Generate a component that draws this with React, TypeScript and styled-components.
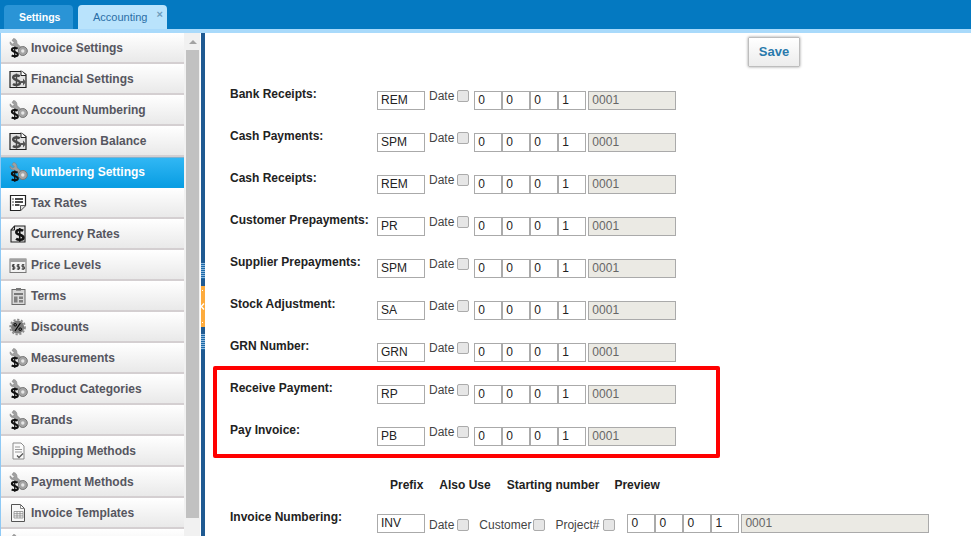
import styled, { createGlobalStyle } from "styled-components";

const GlobalStyle = createGlobalStyle`
  html, body {
    margin: 0;
    padding: 0;
    height: 100%;
    overflow: hidden;
    background: #fff;
    font-family: "Liberation Sans", Arial, sans-serif;
  }
`;

const Shell = styled.div`
  width: 971px;
  height: 536px;
  display: flex;
  flex-direction: column;
  overflow: hidden;
`;

const TopBar = styled.div`
  height: 29px;
  flex: none;
  display: flex;
  align-items: flex-end;
  gap: 5px;
  padding-left: 4px;
  background: #0479c1;
  border-top: 1px solid #2b8ccb;
  box-sizing: content-box;
  margin-top: -1px;
  border-bottom: 4px solid #a9dafb;
`;

const Tab = styled.div<{ $active?: boolean }>`
  position: relative;
  height: 24px;
  width: ${({ $active }) => ($active ? "89px" : "69px")};
  box-sizing: border-box;
  padding-left: 15px;
  border-radius: 4px 4px 0 0;
  font-size: 10.5px;
  line-height: 25px;
  font-weight: ${({ $active }) => ($active ? "normal" : "bold")};
  color: ${({ $active }) => ($active ? "#2a6ea6" : "#fff")};
  background: ${({ $active }) => ($active ? "#b9e3fc" : "#2a94d6")};
  ${({ $active }) => $active && "font-size: 11px;"}
`;

const TabClose = styled.span`
  position: absolute;
  top: -3px;
  right: 4px;
  font-size: 11px;
  font-weight: bold;
  color: #6f9cbc;
`;

const Body = styled.div`
  flex: 1;
  min-height: 0;
  display: flex;
`;

const SideMenu = styled.div`
  width: 184px;
  flex: none;
  overflow: hidden;
  box-sizing: border-box;
  border-left: 1px solid #8ec9f5;
  background: #fff;
`;

const MenuRow = styled.div<{ $active?: boolean; $shift?: number }>`
  height: 31px;
  box-sizing: border-box;
  display: flex;
  align-items: center;
  padding-left: 7px;
  border-bottom: 2px solid ${({ $active }) => ($active ? "#0a9ee3" : "#d4cfd1")};
  font-size: 12px;
  font-weight: bold;
  color: ${({ $active }) => ($active ? "#fff" : "#565660")};
  background: ${({ $active }) =>
    $active
      ? "linear-gradient(#31b7f4, #0a9ee3)"
      : "linear-gradient(#ffffff, #e9e9e9)"};
  ${({ $active }) => $active && "border-top: 1px solid #7fb2cf;"}

  svg {
    width: 20px;
    height: 20px;
    flex: none;
    overflow: visible;
    margin-right: ${({ $shift }) => 3 + ($shift ?? 0)}px;
  }
`;

const ScrollTrack = styled.div`
  width: 16px;
  flex: none;
  box-sizing: border-box;
  padding-left: 2px;
  display: flex;
  flex-direction: column;
  align-items: flex-start;
  background: #f1f1f1;
`;

const ScrollArrow = styled.div`
  height: 17px;
  width: 13px;
  display: flex;
  align-items: center;
  justify-content: center;

  &::before {
    content: "";
    border-left: 4px solid transparent;
    border-right: 4px solid transparent;
    border-bottom: 4px solid #a3a3a3;
  }
`;

const ScrollThumb = styled.div`
  width: 13px;
  height: 468px;
  background: #c1c1c1;
`;

const Splitter = styled.div`
  width: 4px;
  flex: none;
  margin-left: 1px;
  display: flex;
  flex-direction: column;
  align-items: center;
  background: #1f5a92;
`;

const Grip = styled.div<{ $top: number }>`
  width: 4px;
  height: 16px;
  margin-top: ${({ $top }) => $top}px;
  background: repeating-linear-gradient(#8fb7dc 0 1px, #1c6aa8 1px 2px);
`;

const Toggle = styled.div`
  position: relative;
  width: 4px;
  height: 41px;
  margin-top: 7px;
  flex: none;
  background: #fdab3d;

  &::before,
  &::after {
    content: "";
    position: absolute;
    left: 1px;
    width: 1px;
    height: 1px;
    background: #fff;
  }
  &::before {
    top: 4px;
  }
  &::after {
    bottom: 4px;
  }

  svg {
    position: absolute;
    left: -1px;
    top: 17px;
    width: 5px;
    height: 7px;
  }
`;

const Main = styled.div`
  position: relative;
  flex: 1;
  min-width: 0;
  padding-left: 25px;
`;

const SaveBar = styled.div`
  height: 51px;
  display: flex;
  justify-content: flex-end;
  padding: 4px 171px 0 0;
  box-sizing: border-box;
`;

const SaveButton = styled.button`
  width: 52px;
  height: 30px;
  padding: 0 0 2px;
  border: 1px solid #bdbdbd;
  border-radius: 1px;
  background: linear-gradient(#ffffff, #ececec);
  box-shadow: 0 0 3px rgba(0, 0, 0, 0.4);
  font-family: inherit;
  font-size: 13px;
  font-weight: bold;
  color: #2a7aac;
`;

const FormRow = styled.div`
  height: 42px;
  display: flex;
  align-items: flex-start;
  font-size: 12px;
`;

const FieldLabel = styled.div`
  width: 147px;
  flex: none;
  margin-top: 3px;
  line-height: 14px;
  font-weight: bold;
  color: #222;
`;

const Field = styled.input<{ $w: number; $gap?: number; $grey?: boolean }>`
  width: ${({ $w }) => $w}px;
  height: 19px;
  flex: none;
  box-sizing: border-box;
  margin: 7px 0 0 ${({ $gap }) => $gap ?? 0}px;
  padding: 0 0 1px 3px;
  border: 1px solid #aaa;
  border-radius: 0;
  outline: none;
  font-family: inherit;
  font-size: 12px;
  color: ${({ $grey }) => ($grey ? "#666" : "#222")};
  background: ${({ $grey }) => ($grey ? "#ebeae4" : "#fff")};
`;

const InlineText = styled.span<{ $gap: number; $top?: number }>`
  flex: none;
  margin: ${({ $top }) => $top ?? 5}px 0 0 ${({ $gap }) => $gap}px;
  line-height: 14px;
  color: #444;
`;

const Check = styled.input.attrs({ type: "checkbox" })<{ $gap: number; $top?: number }>`
  appearance: none;
  width: 12px;
  height: 12px;
  flex: none;
  box-sizing: border-box;
  margin: ${({ $top }) => $top ?? 6}px 0 0 ${({ $gap }) => $gap}px;
  border: 1px solid #ababab;
  border-radius: 2px;
  background: #e6e6e6;
`;

const HeadingRow = styled.div`
  display: flex;
  margin-top: 16px;
  padding-left: 160px;
  font-size: 12px;
  line-height: 14px;
  font-weight: bold;
  color: #222;
`;

const Heading = styled.span<{ $gap?: number }>`
  margin-left: ${({ $gap }) => $gap ?? 0}px;
`;

const InvoiceRow = styled(FormRow)`
  margin-top: 15px;
`;

const Highlight = styled.div`
  position: absolute;
  left: 8px;
  top: 333px;
  width: 507px;
  height: 92px;
  box-sizing: border-box;
  border: 4px solid #f00;
  border-radius: 2px;
  pointer-events: none;
`;

type IconKind =
  | "wrench"
  | "money"
  | "list"
  | "currency"
  | "price"
  | "clip"
  | "gear"
  | "ship"
  | "template";

const Dollar = ({
  x = 0,
  y = 0,
  s = 1,
  color = "#111",
}: {
  x?: number;
  y?: number;
  s?: number;
  color?: string;
}) => (
  <g transform={`translate(${x} ${y}) scale(${s})`} fill="none" stroke={color} strokeWidth="2.2">
    <path d="M8 2.4C6.6 1.4 2 1.2 2 3.6 2 6.2 8.2 5.6 8.2 8.4 8.2 10.8 3.4 10.6 1.8 9.4" />
    <path d="M5 0v12" strokeWidth="1.4" />
  </g>
);

const Icon = ({ kind }: { kind: IconKind }) => {
  switch (kind) {
    case "wrench":
      return (
        <svg viewBox="0 0 20 20">
          <path
            d="M5.5 .5 4 2.5 6.5 4.8 4.5 6 2 3.8C1.6 6.6 3.8 8.4 6.4 7.8L13 14 15.4 11.5 9 5.4C9.2 2.6 7.6.3 5.5 .5Z"
            fill="#a0a0a0"
            stroke="#7a7a7a"
            strokeWidth=".5"
          />
          <circle cx="14.8" cy="13" r="4.5" fill="#a4a4a4" stroke="#777" />
          <circle cx="14.8" cy="13" r="1.7" fill="#e6e6e6" />
          <Dollar x={2} y={8.4} s={0.95} />
        </svg>
      );
    case "money":
      return (
        <svg viewBox="0 0 20 20">
          <path d="M2 2.5h12l4 3v13H2Z" fill="#e2e2e2" stroke="#222" strokeWidth="1.2" />
          <path d="M13 1.5v5h5" fill="#fff" stroke="#222" />
          <Dollar x={3} y={4.6} s={1.1} color="#4a4a4a" />
          <path d="M12.5 12h2.5V9.5l3 3.5-3 3.5V14h-2.5Z" fill="#555" />
        </svg>
      );
    case "list":
      return (
        <svg viewBox="0 0 20 20">
          <path d="M2.5 2.5h15v10l-5 5h-10Z" fill="#fff" stroke="#222" strokeWidth="1.2" />
          <path d="M17.5 12.5h-5v5" fill="#ddd" stroke="#555" />
          <path d="M4.5 6h1M7 6h8M4.5 9h1M7 9h8M4.5 12h1M7 12h4.5" stroke="#111" strokeWidth="1.3" />
        </svg>
      );
    case "currency":
      return (
        <svg viewBox="0 0 20 20">
          <path d="M6.5 2H17v16H3V6Z" fill="#e4e4e4" stroke="#222" strokeWidth="1.1" />
          <path d="M6.5 2v4H3" fill="none" stroke="#222" />
          <Dollar x={6} y={4} s={1.15} />
        </svg>
      );
    case "price":
      return (
        <svg viewBox="0 0 20 20">
          <rect x="2" y="4" width="16" height="13.5" fill="#f3f3f3" stroke="#777" />
          <rect x="2" y="4" width="16" height="3" fill="#a0a0a0" />
          <g transform="translate(3.4 9)" fill="none" stroke="#333" strokeWidth=".9">
            <path d="M3.4 .8H1v2h2.4v2.2H.6M2 0v6" />
            <path d="M8.2 .8H5.8v2h2.4v2.2H5.4M6.9 0v6" />
            <path d="M13 .8h-2.4v2H13v2.2h-2.8M11.7 0v6" />
          </g>
        </svg>
      );
    case "clip":
      return (
        <svg viewBox="0 0 20 20">
          <rect x="4" y="3.5" width="13" height="15" fill="#d8d8d8" stroke="#6a6a6a" />
          <rect x="8" y="2" width="5" height="2.6" fill="#777" />
          <path d="M6 7h9v2H6Z" fill="#777" />
          <path d="M6 10.5h3.5v6H6ZM11 10.5h4v2.4h-4ZM11 14h4v2.5h-4Z" fill="#808080" />
        </svg>
      );
    case "gear":
      return (
        <svg viewBox="0 0 20 20">
          <circle cx="9.6" cy="10" r="6.6" fill="#7a7a7a" />
          <circle cx="9.6" cy="10" r="7.4" fill="none" stroke="#8c8c8c" strokeWidth="1.8" strokeDasharray="2.2 1.6" />
          <path d="M7 14 12.4 6" stroke="#000" strokeWidth="1.2" />
          <circle cx="7.2" cy="7.8" r="1.3" fill="none" stroke="#000" />
          <circle cx="12.2" cy="12.2" r="1.3" fill="none" stroke="#000" />
        </svg>
      );
    case "ship":
      return (
        <svg viewBox="0 0 20 20">
          <path d="M5 2h8l3 3v13H5Z" fill="#fafafa" stroke="#8b8b8b" />
          <path d="M7 6h5M7 8.5h7M7 11h7" stroke="#999" />
          <path d="M9 14.5 11 16.5 15 12.5" fill="none" stroke="#555" strokeWidth="1.3" />
        </svg>
      );
    case "template":
      return (
        <svg viewBox="0 0 20 20">
          <path d="M3.5 1.5h9l4 4v13h-13Z" fill="#f8f8f8" stroke="#555" />
          <path d="M12.5 1.5v4h4" fill="none" stroke="#888" />
          <path d="M6 8.5h9v6.5H6ZM6 10.7h9M6 12.9h9M9 8.5V15M12 8.5V15" fill="none" stroke="#8a8a8a" strokeWidth=".8" />
        </svg>
      );
  }
};

const menuItems: { label: string; icon: IconKind; active?: boolean; shift?: number }[] = [
  { label: "Invoice Settings", icon: "wrench" },
  { label: "Financial Settings", icon: "money" },
  { label: "Account Numbering", icon: "wrench" },
  { label: "Conversion Balance", icon: "money" },
  { label: "Numbering Settings", icon: "wrench", active: true },
  { label: "Tax Rates", icon: "list" },
  { label: "Currency Rates", icon: "currency" },
  { label: "Price Levels", icon: "price" },
  { label: "Terms", icon: "clip" },
  { label: "Discounts", icon: "gear" },
  { label: "Measurements", icon: "wrench" },
  { label: "Product Categories", icon: "wrench" },
  { label: "Brands", icon: "wrench" },
  { label: "Shipping Methods", icon: "ship", shift: 1 },
  { label: "Payment Methods", icon: "wrench" },
  { label: "Invoice Templates", icon: "template" },
  { label: "", icon: "wrench" },
];

const numberingRows = [
  ["Bank Receipts:", "REM"],
  ["Cash Payments:", "SPM"],
  ["Cash Receipts:", "REM"],
  ["Customer Prepayments:", "PR"],
  ["Supplier Prepayments:", "SPM"],
  ["Stock Adjustment:", "SA"],
  ["GRN Number:", "GRN"],
  ["Receive Payment:", "RP"],
  ["Pay Invoice:", "PB"],
];

const Digits = ({ first }: { first: number }) => (
  <>
    {["0", "0", "0", "1"].map((digit, i) => (
      <Field key={i} $w={28} $gap={i === 0 ? first : 0} defaultValue={digit} readOnly />
    ))}
  </>
);

const App = () => (
  <Shell>
    <GlobalStyle />
    <TopBar>
      <Tab>Settings</Tab>
      <Tab $active>
        Accounting
        <TabClose>×</TabClose>
      </Tab>
    </TopBar>
    <Body>
      <SideMenu>
        {menuItems.map((item, i) => (
          <MenuRow key={i} $active={item.active} $shift={item.shift}>
            <Icon kind={item.icon} />
            {item.label}
          </MenuRow>
        ))}
      </SideMenu>
      <ScrollTrack>
        <ScrollArrow />
        <ScrollThumb />
      </ScrollTrack>
      <Splitter>
        <Grip $top={230} />
        <Toggle>
          <svg viewBox="0 0 5 7">
            <path d="M4 .5 1.2 3.5 4 6.5" fill="none" stroke="#fff" strokeWidth="1.4" />
          </svg>
        </Toggle>
        <Grip $top={7} />
      </Splitter>
      <Main>
        <SaveBar>
          <SaveButton>Save</SaveButton>
        </SaveBar>
        {numberingRows.map(([label, prefix]) => (
          <FormRow key={label}>
            <FieldLabel>{label}</FieldLabel>
            <Field $w={48} defaultValue={prefix} readOnly />
            <InlineText $gap={4}>Date</InlineText>
            <Check $gap={3} readOnly />
            <Digits first={5} />
            <Field $w={88} $gap={2} $grey defaultValue="0001" readOnly />
          </FormRow>
        ))}
        <HeadingRow>
          <Heading>Prefix</Heading>
          <Heading $gap={16}>Also Use</Heading>
          <Heading $gap={16}>Starting number</Heading>
          <Heading $gap={15}>Preview</Heading>
        </HeadingRow>
        <InvoiceRow>
          <FieldLabel>Invoice Numbering:</FieldLabel>
          <Field $w={48} defaultValue="INV" readOnly />
          <InlineText $gap={4} $top={11}>Date</InlineText>
          <Check $gap={3} $top={12} readOnly />
          <InlineText $gap={10} $top={11}>Customer</InlineText>
          <Check $gap={2} $top={12} readOnly />
          <InlineText $gap={10} $top={11}>Project#</InlineText>
          <Check $gap={4} $top={12} readOnly />
          <Digits first={12} />
          <Field $w={188} $gap={2} $grey defaultValue="0001" readOnly />
        </InvoiceRow>
        <Highlight />
      </Main>
    </Body>
  </Shell>
);

export default App;
